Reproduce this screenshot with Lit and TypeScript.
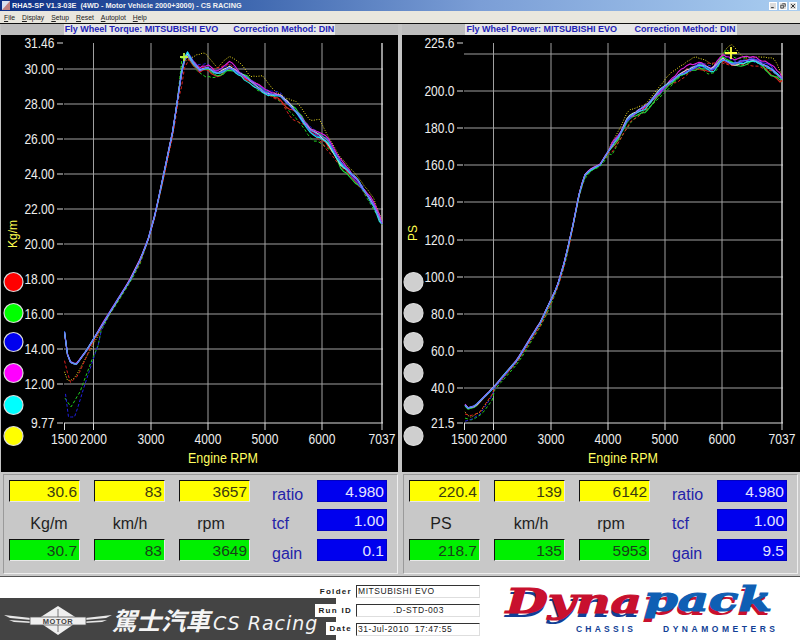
import { LitElement, html, css, svg } from "lit";
import { customElement } from "lit/decorators.js";

type P = [number, number];

function rng(seed: number) {
  let s = seed >>> 0;
  return () => {
    s = (s * 1664525 + 1013904223) >>> 0;
    return s / 4294967296;
  };
}

function interp(knots: P[], x: number): number {
  for (let i = 1; i < knots.length; i++) {
    if (x <= knots[i][0]) {
      const [x0, y0] = knots[i - 1];
      const [x1, y1] = knots[i];
      return y0 + ((y1 - y0) * (x - x0)) / (x1 - x0 || 1);
    }
  }
  return knots[knots.length - 1][1];
}

/**
 * One dyno run: knots plus slow drift and fine jitter. The spread is narrow on
 * the steep climb and opens up past `wideFrom`; `base` pulls a run onto the
 * mean curve in the stretch where every run in the reference coincides.
 */
function trace(knots: P[], seed: number, amp: number, drift: number, wideFrom: number, dy = 0, base?: P[], tightFrom = 0): string {
  const r = rng(seed);
  const start = knots[0][0];
  const end = knots[knots.length - 1][0];
  const slow: P[] = [];
  for (let x = start - 30; x <= end + 30; x += 14) slow.push([x, (r() - 0.5) * 2 * drift]);
  const pts: string[] = [];
  for (let x = start; x <= end; x += 3) {
    const w = x < wideFrom ? 0.22 : 1;
    let y = interp(knots, x);
    if (base && x > tightFrom && x < wideFrom) y = interp(base, x) + (y - interp(base, x)) * 0.35;
    y += ((r() - 0.5) * 2 * amp + interp(slow, x)) * w + dy * w;
    pts.push(`${x.toFixed(1)},${y.toFixed(1)}`);
  }
  pts.push(`${end},${(knots[knots.length - 1][1] + dy * 0.3).toFixed(1)}`);
  return pts.join(" ");
}

const T_BASE: P[] = [
  [64.5, 332], [67, 353], [70, 362], [76, 365], [87, 350], [110, 312], [120, 296], [130, 280], [140, 260], [148, 240], [155, 215],
  [160, 192], [173, 130], [183, 63], [187, 53], [192, 62], [200, 72], [208, 68], [217, 73], [230, 67],
  [247, 78], [267, 93], [280, 95], [297, 112], [310, 130], [327, 140], [340, 162], [357, 180], [373, 203], [382, 224],
];
const T_YEL: P[] = [
  [64.5, 372], [68, 382], [75, 378], [88, 354], [110, 314], [140, 266], [160, 194], [173, 136], [182, 62], [193, 56], [205, 53], [217, 68],
  [230, 55], [240, 63], [250, 77], [263, 76], [273, 90], [297, 102], [310, 120], [320, 119], [328, 137], [340, 157], [357, 177], [373, 197], [382, 220],
];
const T_GRN: P[] = [
  [65, 398], [71, 407], [80, 392], [92, 360], [110, 318], [140, 272], [160, 198], [173, 138], [181, 58], [188, 54], [196, 70], [206, 77], [215, 78],
  [230, 68], [250, 80], [258, 91], [270, 92], [290, 112], [306, 132], [312, 140], [322, 143], [333, 152], [346, 170], [362, 190], [375, 212], [382, 225],
];
const T_BLU: P[] = [
  [65.5, 394], [65.5, 417], [75, 417], [84, 387], [98, 345], [115, 305], [140, 266], [160, 192], [173, 131], [184, 62], [188, 56], [196, 66], [207, 64], [216, 72],
  [230, 65], [250, 80], [270, 91], [280, 92], [296, 112], [310, 128], [327, 137], [342, 164], [360, 183], [375, 205], [382, 224],
];
const T_RED: P[] = [
  [64.5, 361], [70, 383], [78, 376], [92, 344], [112, 312], [140, 268], [165, 180], [175, 135], [184, 70], [190, 58], [200, 68], [215, 70], [230, 64],
  [248, 82], [262, 93], [280, 100], [292, 118], [304, 123], [320, 140], [340, 165], [360, 186], [375, 205], [382, 224],
];

const P_BASE: P[] = [
  [465, 405], [468, 408], [475, 406], [493, 388], [517, 360], [540, 323], [557, 287], [565, 260], [573, 225], [580, 190], [585, 175], [590, 170],
  [600, 165], [608, 152], [620, 135], [628, 118], [647, 105], [663, 88], [678, 75], [700, 64], [712, 70], [723, 58], [733, 63], [753, 59], [770, 68], [782, 79],
];
const P_YEL: P[] = [
  [465, 412], [470, 418], [480, 412], [495, 391], [520, 362], [545, 322], [565, 264], [580, 190], [590, 170], [600, 162], [610, 146], [620, 129], [628, 110],
  [645, 104], [660, 86], [670, 73], [695, 56], [705, 60], [716, 66], [724, 52], [731, 44], [745, 58], [760, 56], [775, 60], [782, 75],
];
const P_GRN: P[] = [
  [465, 418], [472, 420], [482, 414], [497, 394], [522, 366], [548, 322], [566, 268], [580, 194], [592, 172], [604, 168], [612, 155], [622, 137], [632, 122],
  [648, 108], [665, 92], [680, 76], [698, 66], [708, 74], [716, 73], [726, 50], [736, 60], [750, 57], [765, 68], [775, 74], [782, 84],
];
const P_BLU: P[] = [
  [465, 421], [470, 420], [480, 414], [496, 390], [518, 362], [542, 322], [558, 288], [566, 258], [574, 224], [581, 188], [590, 169], [602, 162], [610, 149], [622, 132], [630, 116],
  [648, 103], [664, 86], [680, 74], [700, 62], [714, 66], [726, 56], [735, 62], [752, 60], [768, 66], [782, 80],
];
const P_RED: P[] = [
  [465, 414], [470, 416], [480, 412], [495, 390], [520, 362], [544, 326], [562, 282], [570, 250], [578, 206], [586, 178], [594, 170], [606, 160], [618, 142], [630, 122],
  [650, 108], [668, 84], [678, 82], [692, 70], [705, 64], [720, 62], [730, 66], [745, 64], [760, 68], [775, 72], [782, 82],
];

interface Axis {
  vb: string; w: number;
  base: P[]; yel: P[]; grn: P[]; blu: P[]; red: P[];
  x0: number;
  yTicks: [string, number][];
  extraLines: number[];
  unit: string; unitY: number;
  cross: P; crossColor: string; crossSize: number;
  discs: string[]; discX: number;
  seed: number; wideFrom: number; tightFrom: number;
}

const YS = [282, 313, 342, 373, 405, 436];

const TORQUE: Axis = {
  vb: "1 35 397 437", w: 397,
  base: T_BASE, yel: T_YEL, grn: T_GRN, blu: T_BLU, red: T_RED, x0: 0,
  yTicks: [["31.46", 43], ["30.00", 69], ["28.00", 104], ["26.00", 139], ["24.00", 174], ["22.00", 209], ["20.00", 244], ["18.00", 279], ["16.00", 314], ["14.00", 349], ["12.00", 384], ["9.77", 423]],
  extraLines: [],
  unit: "Kg/m", unitY: 234,
  cross: [184, 57], crossColor: "#b8f040", crossSize: 4,
  discs: ["#ff0000", "#00ff00", "#0000ee", "#ff00ff", "#00ffff", "#ffff00"], discX: 13.5, seed: 11,
  wideFrom: 180, tightFrom: 100,
};
const POWER: Axis = {
  vb: "402 35 398 437", w: 398,
  base: P_BASE, yel: P_YEL, grn: P_GRN, blu: P_BLU, red: P_RED, x0: 400,
  yTicks: [["225.6", 43], ["200.0", 91], ["180.0", 128], ["160.0", 165], ["140.0", 202], ["120.0", 240], ["100.0", 277], ["80.0", 314], ["60.0", 351], ["40.0", 388], ["21.5", 423]],
  extraLines: [54],
  unit: "PS", unitY: 233,
  cross: [731, 53], crossColor: "#ffff40", crossSize: 6,
  discs: ["#cfcfcf", "#cfcfcf", "#cfcfcf", "#cfcfcf", "#cfcfcf", "#cfcfcf"], discX: 413.5, seed: 77,
  wideFrom: 612, tightFrom: 492,
};

const XT: [string, number][] = [["1500", 64.5], ["2000", 93.5], ["3000", 151], ["4000", 208], ["5000", 265], ["6000", 322], ["7037", 382]];

function chart(a: Axis) {
  const ox = a.x0;
  const yLines = [...a.yTicks.slice(1, -1).map((t) => t[1]), ...a.extraLines];
  const main = [
    { c: "#e02020", s: 3, amp: 1.0, drift: 4.4, dy: 2 },
    { c: "#20e040", s: 4, amp: 1.0, drift: 4.2, dy: 1.6 },
    { c: "#3030ff", s: 5, amp: 0.8, drift: 3.2, dy: -0.3 },
    { c: "#e020e0", s: 6, amp: 0.9, drift: 3.6, dy: -2.2 },
    { c: "#d8d8d8", s: 7, amp: 0.6, drift: 2.2, dy: 0.2 },
    { c: "#20e8e8", s: 8, amp: 0.8, drift: 3, dy: 0.8 },
    { c: "#6a6cff", s: 9, amp: 0.5, drift: 1.8, dy: 0 },
  ];
  const dashed = (k: P[], s: number) => trace(k, a.seed + s, 0.6, 1.2, a.wideFrom, 0, a.base, a.tightFrom);
  return html`<svg class="plot" viewBox=${a.vb} width=${a.w} height="437" xmlns="http://www.w3.org/2000/svg">
    ${yLines.map((y) => svg`<line class="grid" x1=${ox + 64} x2=${ox + 383} y1=${y} y2=${y}></line>`)}
    ${XT.slice(1).map((t) => svg`<line class=${t[0] === "7037" ? "grid last" : "grid"} x1=${ox + t[1]} x2=${ox + t[1]} y1="43" y2="423"></line>`)}
    <line class="axis" x1=${ox + 64} x2=${ox + 383} y1="423" y2="423"></line>
    ${a.yTicks.map((t) => svg`<line class="axis" x1=${ox + 57} x2=${ox + 63} y1=${t[1]} y2=${t[1]}></line>
      <text class="tick" text-anchor="end" transform=${`translate(${ox + 54.5},${t[1] + 5}) scale(.86,1)`}>${t[0]}</text>`)}
    ${XT.map((t) => svg`<line class="axis" x1=${ox + t[1]} x2=${ox + t[1]} y1="423" y2="430"></line>
      <text class="tick" text-anchor="middle" transform=${`translate(${ox + t[1]},444) scale(.86,1)`}>${t[0]}</text>`)}

    <polyline class="run dot" stroke="#f0e020" points=${dashed(a.yel, 1)}></polyline>
    <polyline class="run dash" stroke="#20d020" points=${dashed(a.grn, 2)}></polyline>
    <polyline class="run dash" stroke="#2020e0" points=${dashed(a.blu, 3)}></polyline>
    <polyline class="run dash" stroke="#e02020" points=${dashed(a.red, 4)}></polyline>
    ${main.map((m) => svg`<polyline class="run" stroke=${m.c} points=${trace(a.base, a.seed * 13 + m.s, m.amp, m.drift, a.wideFrom, m.dy)}></polyline>`)}

    <path class="cross" stroke=${a.crossColor} d=${`M${a.cross[0] - a.crossSize} ${a.cross[1]}h${a.crossSize * 2}M${a.cross[0]} ${a.cross[1] - a.crossSize}v${a.crossSize * 2}`}></path>

    <text class="unit" text-anchor="middle" transform=${`translate(${ox + (ox ? 16.5 : 17)},${a.unitY}) rotate(-90)`}>${a.unit}</text>
    <text class="rpm" text-anchor="middle" transform=${`translate(${ox + 223},463) scale(.89,1)`}>Engine RPM</text>
    ${a.discs.map((c, i) => svg`<circle class="disc" cx=${a.discX} cy=${YS[i]} r="9.5" fill=${c}></circle>`)}
  </svg>`;
}

function readouts(r: { top: string[]; units: string[]; unitClass: string[]; low: string[]; gain: string }) {
  return html`<div class="readout"><div class="groove">
    ${r.top.map((v) => html`<div class="field yellow">${v}</div>`)}
    <div class="side">ratio</div><div class="field blue">4.980</div>
    ${r.units.map((u, i) => html`<div class=${"unitname " + r.unitClass[i]}>${u}</div>`)}
    <div class="side">tcf</div><div class="field blue">1.00</div>
    ${r.low.map((v) => html`<div class="field green">${v}</div>`)}
    <div class="side">gain</div><div class="field blue">${r.gain}</div>
  </div></div>`;
}

@customElement("app-root")
export class AppRoot extends LitElement {
  static styles = css`
    :host { display: block; width: 800px; height: 640px; overflow: hidden; background: #fff; font-family: "Liberation Sans", Arial, sans-serif; }
    .titlebar { height: 11px; display: flex; align-items: center; padding: 0 3px 0 2px; gap: 2px; background: linear-gradient(90deg, #0c2f86 0%, #3d66ae 30%, #7b9ed6 60%, #a9cdf0 100%); }
    .appicon { width: 8px; height: 9px; flex: none; }
    .ttl { flex: 1; color: #f2f2f2; font-size: 7.3px; font-weight: 700; white-space: pre; line-height: 11px; }
    .wbtns { display: flex; gap: 2px; }
    .wbtn { width: 8px; height: 8px; background: #dcdcdc; border: 0.5px solid #fff; box-sizing: border-box; display: block; }
    .menu { height: 13px; box-sizing: border-box; background: #e9e7de; border-bottom: 1px solid #111; display: flex; align-items: center; gap: 7px; padding: 0 0 0 4px; font-size: 6.8px; color: #222; }
    .menu u { text-decoration: underline; }
    .charts { display: flex; height: 448px; background: #c4c4c4; }
    .pane { display: flex; flex-direction: column; }
    .pane.l { width: 398px; padding-left: 1px; box-sizing: border-box; margin-right: 4px; }
    .pane.r { width: 398px; }
    .head { height: 11px; display: flex; justify-content: center; background: #bdbdbd; }
    .head span { background: #e6e6e6; color: #2323b8; font-size: 9px; font-weight: 700; line-height: 11px; padding: 0 1px; white-space: pre; }
    .plot { display: block; background: #000; }
    .grid { stroke: #a0a0a0; stroke-width: 1; }
    .grid.last { stroke: #d8d8d8; stroke-width: 1.4; }
    .axis { stroke: #dcdcdc; stroke-width: 1; }
    .tick { fill: #eeeeee; font-size: 14px; }
    .unit { fill: #ffff50; font-size: 12px; }
    .rpm { fill: #ffff60; font-size: 14px; }
    .run { fill: none; stroke-width: 1.1; stroke-linejoin: round; }
    .dot { stroke-dasharray: 1 1.5; stroke-width: 1; }
    .dash { stroke-dasharray: 3 2; stroke-width: 1; }
    .cross { fill: none; stroke-width: 1.8; }
    .disc { stroke: #dcdcdc; stroke-width: 1.2; }
    .panels { display: flex; height: 105px; background: #c8c8c8; border-bottom: 1.5px solid #555; box-sizing: border-box; }
    .readout { width: 400px; padding: 2px 2px 2px 3px; box-sizing: border-box; }
    .groove { height: 100%; box-sizing: border-box; border: 1px solid #9a9a9a; border-right-color: #eee; border-bottom-color: #eee; padding: 5px 0 0 5px; display: grid; grid-template-columns: 71px 71px 71px 39px 70px; grid-template-rows: 29px 30px 22px; column-gap: 14px; }
    .field { height: 22px; box-sizing: border-box; text-align: right; font-size: 15.5px; line-height: 21px; padding-right: 2px; border: 1px solid; }
    .yellow { background: #ffff00; color: #3a3a10; border-color: #111 #e8e8e8 #e8e8e8 #111; }
    .green { background: #00f000; color: #184018; border-color: #111 #e8e8e8 #e8e8e8 #111; }
    .blue { background: #0000ee; color: #e4e4ff; border-color: #0000c0; }
    .side { color: #2323a8; font-size: 16px; line-height: 30px; height: 22px; padding-left: 8px; white-space: nowrap; }
    .unitname { color: #1f1f1f; font-size: 16px; line-height: 30px; text-align: center; height: 22px; }
    .u-kg { padding-left: 9px; } .u-ps { padding-right: 7px; } .u-rpm { padding-right: 7px; } .u-kmh { padding-left: 1px; } .u-kmh2 { padding-left: 3px; }
    .footer { height: 63px; display: flex; background: #fff; }
    .left { width: 356px; position: relative; }
    .brandband { margin-top: 21px; width: 336px; height: 42px; box-sizing: border-box; background: #444444; display: flex; align-items: center; padding: 0 0 0 4px; }
    .wings { width: 108px; height: 34px; flex: none; margin-top: 4px; }
    .brandtext { color: #f4f4f4; font-style: italic; font-weight: 700; white-space: nowrap; font-size: 24.5px; font-family: "Liberation Sans", "Noto Sans CJK TC", sans-serif; }
    .brandtext b { font-family: "DejaVu Sans", sans-serif; font-weight: 400; font-size: 19px; letter-spacing: 1px; margin-left: 3px; }
    .info { position: absolute; left: 0; top: 0; width: 356px; height: 63px; display: grid; grid-template-rows: repeat(3, 18.5px); padding-top: 8px; box-sizing: border-box; justify-items: end; }
    .info span { background: #fff; font-size: 8px; font-weight: 700; letter-spacing: 1.3px; line-height: 13px; padding: 0 4px 0 3px; color: #1c1c1c; height: 13px; }
    .fields { width: 124px; flex: none; display: flex; flex-direction: column; gap: 6px; padding-top: 8px; }
    .fv { height: 13px; box-sizing: border-box; border: 1px solid #dedede; border-top: 1.5px solid #333; border-left: 1px solid #333; font-size: 8.5px; letter-spacing: 0.55px; line-height: 11px; padding-left: 1px; white-space: pre; color: #222; }
    .fv.mid { text-align: center; }
    .dyna { width: 320px; height: 63px; display: block; flex: none; }
    .dt { font-family: "DejaVu Serif", serif; font-weight: 700; font-style: italic; font-size: 33px; }
    .cd { font-family: "Liberation Sans", sans-serif; font-weight: 700; font-size: 8.5px; fill: #123f96; }
    .motor { font-size: 7.5px; font-weight: 700; fill: #444; letter-spacing: 0.5px; }
  `;

  render() {
    return html`
      <div class="titlebar">
        <svg class="appicon" viewBox="0 0 8 9"><rect width="8" height="9" fill="#d8e0f0"></rect><path d="M0 9L8 0V9Z" fill="#c08080"></path></svg>
        <div class="ttl">RHA5-SP V1.3-03E  (4WD - Motor Vehicle 2000+3000) - CS RACING</div>
        <div class="wbtns">
          <svg class="wbtn" viewBox="0 0 8 8"><path d="M1.5 6.2h3.5" stroke="#111" stroke-width="1.2"></path></svg>
          <svg class="wbtn" viewBox="0 0 8 8"><path d="M3 1h4v3.5H6M1 3h3.5v3.8H1z" stroke="#111" stroke-width=".9" fill="none"></path></svg>
          <svg class="wbtn" viewBox="0 0 8 8"><path d="M1.5 1.5l5 5M6.5 1.5l-5 5" stroke="#111" stroke-width="1.1"></path></svg>
        </div>
      </div>
      <div class="menu">
        <span><u>F</u>ile</span><span><u>D</u>isplay</span><span><u>S</u>etup</span><span><u>R</u>eset</span><span><u>A</u>utoplot</span><span><u>H</u>elp</span>
      </div>
      <div class="charts">
        <div class="pane l">
          <div class="head"><span>Fly Wheel Torque: MITSUBISHI EVO      Correction Method: DIN</span></div>
          ${chart(TORQUE)}
        </div>
        <div class="pane r">
          <div class="head"><span>Fly Wheel Power: MITSUBISHI EVO       Correction Method: DIN</span></div>
          ${chart(POWER)}
        </div>
      </div>
      <div class="panels">
        ${readouts({ top: ["30.6", "83", "3657"], units: ["Kg/m", "km/h", "rpm"], unitClass: ["u-kg", "u-kmh", "u-rpm"], low: ["30.7", "83", "3649"], gain: "0.1" })}
        ${readouts({ top: ["220.4", "139", "6142"], units: ["PS", "km/h", "rpm"], unitClass: ["u-ps", "u-kmh2", "u-rpm"], low: ["218.7", "135", "5953"], gain: "9.5" })}
      </div>
      <div class="footer">
        <div class="left">
          <div class="brandband">
            <svg class="wings" viewBox="0 0 108 34">
              <path d="M0 11L27 14V16L6 14ZM5 16L27 17.5V19L10 18ZM81 14L108 11L102 14L81 16ZM81 17.5L103 16L98 18L81 19Z" fill="#e8e8e8"></path>
              <path d="M54 2L76 16L54 31L32 16Z" fill="#efefef"></path>
              <path d="M54 5V13M54 20V28" stroke="#777" stroke-width="1"></path>
              <rect x="26" y="13" width="56" height="8" fill="#efefef" stroke="#555" stroke-width="0.8"></rect>
              <text class="motor" x="54" y="19.8" text-anchor="middle">MOTOR</text>
            </svg>
            <div class="brandtext">駕士汽車<b>CS Racing</b></div>
          </div>
          <div class="info"><span>Folder</span><span>Run ID</span><span>Date</span></div>
        </div>
        <div class="fields">
          <div class="fv">MITSUBISHI EVO</div>
          <div class="fv mid">.D-STD-003</div>
          <div class="fv">31-Jul-2010  17:47:55</div>
        </div>
        <svg class="dyna" viewBox="480 577 320 63">
          <text class="dt" x="506" y="614" textLength="136" lengthAdjust="spacingAndGlyphs" fill="#123f96" transform="translate(-1,3)">Dyna</text>
          <text class="dt" x="644" y="612" textLength="128" lengthAdjust="spacingAndGlyphs" fill="#c8102e" transform="translate(-2,3)">pack</text>
          <text class="dt" x="506" y="613" textLength="136" lengthAdjust="spacingAndGlyphs" fill="#c8102e" stroke="#c8102e" stroke-width="1.2">Dyna</text>
          <text class="dt" x="644" y="611" textLength="128" lengthAdjust="spacingAndGlyphs" fill="#0f5fb4" stroke="#0f5fb4" stroke-width="1.2">pack</text>
          <text class="cd" x="576" y="632" textLength="57">CHASSIS</text>
          <text class="cd" x="663" y="632" textLength="112">DYNAMOMETERS</text>
        </svg>
      </div>
    `;
  }
}
